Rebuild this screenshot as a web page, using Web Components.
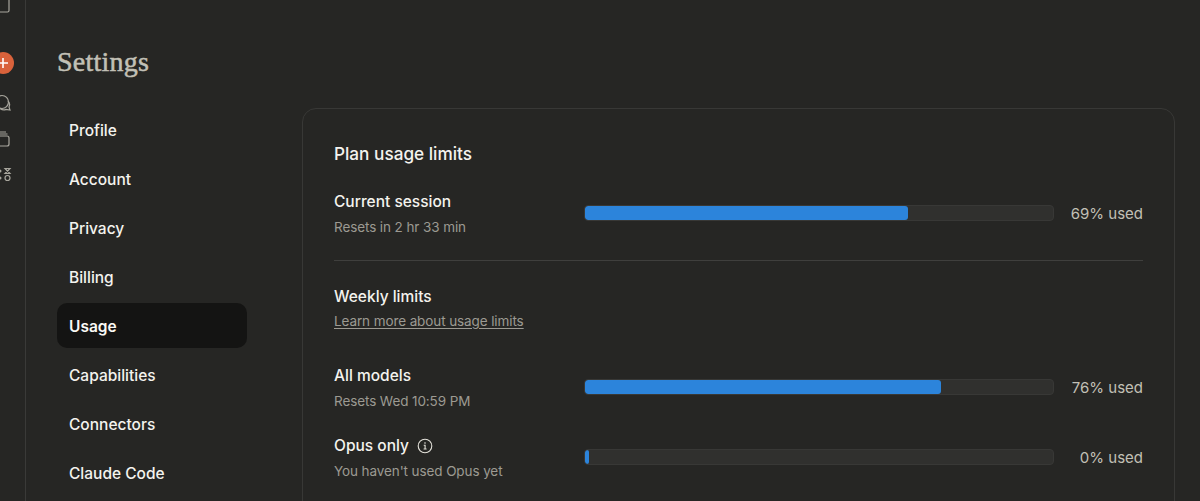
<!DOCTYPE html>
<html>
<head>
<meta charset="utf-8">
<style>
html, body { margin: 0; height: 501px; overflow: hidden; background: #262624; }
body { font-family: Inter, "Liberation Sans", sans-serif; color: #f4f3ee; }
</style>
</head>
<body>
<settings-page>
  <side-rail slot="rail"></side-rail>
  <nav-item>Profile</nav-item>
  <nav-item>Account</nav-item>
  <nav-item>Privacy</nav-item>
  <nav-item>Billing</nav-item>
  <nav-item active>Usage</nav-item>
  <nav-item>Capabilities</nav-item>
  <nav-item>Connectors</nav-item>
  <nav-item>Claude Code</nav-item>
  <usage-card slot="content">
    <usage-row label="Current session" note="Resets in 2 hr 33 min" value="69"></usage-row>
    <hr-line></hr-line>
    <weekly-head></weekly-head>
    <usage-row label="All models" note="Resets Wed 10:59 PM" value="76"></usage-row>
    <usage-row label="Opus only" note="You haven't used Opus yet" value="0" info></usage-row>
  </usage-card>
</settings-page>

<script>
class SettingsPage extends HTMLElement {
    constructor(){
        super();
        this.attachShadow({mode: 'open'});
        this.shadowRoot.innerHTML = `
        <style>
        :host { display: flex; height: 501px; overflow: hidden; }
        .rail { flex: none; width: 25px; border-right: 1px solid #3a3a38; overflow: hidden; }
        main { flex: 1; padding: 46px 25px 0 31px; min-width: 0; }
        h1 {
            margin: 0;
            font: 400 28px/32px "Liberation Serif", serif;
            letter-spacing: 0.25px;
            -webkit-text-stroke: 0.5px #c2c0b6;
            color: #c2c0b6;
        }
        .cols { display: flex; gap: 55px; margin-top: 30px; }
        .nav { flex: none; width: 190px; display: flex; flex-direction: column; gap: 4px; margin-top: -1px; }
        .content { flex: 1; min-width: 0; }
        </style>
        <div class="rail"><slot name="rail"></slot></div>
        <main>
            <h1>Settings</h1>
            <div class="cols">
                <div class="nav"><slot></slot></div>
                <div class="content"><slot name="content"></slot></div>
            </div>
        </main>`;
    }
}

class SideRail extends HTMLElement {
    constructor(){
        super();
        this.attachShadow({mode: 'open'});
        this.shadowRoot.innerHTML = `
        <style>
        :host { display: flex; flex-direction: column; align-items: flex-start; margin-left: -13px; }
        svg { display: block; fill: none; stroke: #a8a69d; stroke-width: 1.2; }
        .top { margin-top: -9px; }
        .new { margin-top: 34px; }
        .chat { margin-top: 15px; }
        .proj { margin-top: 17px; }
        .art { margin-top: 18px; }
        </style>
        <svg class="top" width="24" height="24" viewBox="0 0 24 24"><rect x="2.5" y="2" width="19.500" height="19" rx="1.500"/></svg>
        <svg class="new" width="28" height="28" viewBox="0 0 28 28" style="stroke:none">
            <circle cx="16" cy="14" r="11" fill="#d9623b"/>
            <path d="M16 9v10M11 14h10" stroke="#fff" stroke-width="1.6"/>
        </svg>
        <svg class="chat" width="28" height="22" viewBox="0 0 28 22">
            <circle cx="15" cy="10" r="6.5"/>
            <path d="M21 9c1.500 1.500 2 4 1 6l1 3-4-.6c-1.500.8-4 .6-6-.9"/>
        </svg>
        <svg class="proj" width="28" height="16" viewBox="0 0 28 16">
            <rect x="8" y="5" width="14" height="10" rx="2"/>
            <path d="M9.500 3h11M11 1h8"/>
        </svg>
        <svg class="art" width="28" height="18" viewBox="0 0 28 18">
            <circle cx="13" cy="6" r="1.500" fill="#a8a69d" stroke="none"/>
            <circle cx="13" cy="13" r="1.500" fill="#a8a69d" stroke="none"/>
            <path d="M18 3.500h5l-5 5h5z"/>
            <circle cx="20.500" cy="13" r="2.500"/>
        </svg>`;
    }
}

class NavItem extends HTMLElement {
    constructor(){
        super();
        this.attachShadow({mode: 'open'});
        this.shadowRoot.innerHTML = `
        <style>
        :host {
            display: block;
            height: 45px;
            line-height: 47px;
            padding-left: 12px;
            border-radius: 10px;
            font-size: 15.500px;
            font-weight: 450;
            color: #f4f3ee;
        }
        :host([active]) { background: #141413; font-weight: 600; color: #faf9f5; }
        </style>
        <slot></slot>`;
    }
}

class UsageCard extends HTMLElement {
    constructor(){
        super();
        this.attachShadow({mode: 'open'});
        this.shadowRoot.innerHTML = `
        <style>
        :host {
            display: block;
            box-sizing: border-box;
            height: 500px;
            padding: 32px 31px 0 31px;
            border: 1px solid #383836;
            border-radius: 14px;
        }
        h2 { margin: 0 0 21px; font: 500 17.200px/26px Inter, "Liberation Sans", sans-serif; color: #f4f3ee; }
        </style>
        <h2>Plan usage limits</h2>
        <slot></slot>`;
    }
}

class UsageRow extends HTMLElement {
    constructor(){
        super();
        this.attachShadow({mode: 'open'});
    }

    connectedCallback(){
        this.render();
    }

    render(){
        const value = Number(this.getAttribute('value'));
        const info = this.hasAttribute('info') ? `
            <svg width="16" height="16" viewBox="0 0 16 16" fill="none" stroke="#e4e2da" stroke-width="1.100">
                <circle cx="8" cy="8" r="6.800"/>
                <path d="M6.700 7.200H8.100V11M6.600 11h3"/>
                <circle cx="8" cy="5" r=".8" fill="#e4e2da" stroke="none"/>
            </svg>` : '';
        this.shadowRoot.innerHTML = `
        <style>
        :host { display: flex; align-items: center; height: 50px; margin-bottom: 20px; }
        .text { flex: none; width: 250px; align-self: flex-start; margin-top: 1px; }
        .label { display: flex; align-items: center; gap: 8px; font-size: 15.500px; line-height: 25px; font-weight: 500; color: #f4f3ee; }
        .note { font-size: 13.500px; letter-spacing: -0.1px; line-height: 27px; color: #9c9a92; }
        .track {
            flex: none;
            box-sizing: border-box;
            width: 470px;
            height: 16px;
            background: #30302e;
            border: 1px solid #383836;
            border-radius: 4px;
            overflow: hidden;
        }
        .fill { height: 100%; background: #2c84db; border-radius: 3px; min-width: 4px; }
        .used { flex: 1; text-align: right; font-size: 15px; color: #c2c0b6; white-space: nowrap; }
        </style>
        <div class="text">
            <div class="label">${this.getAttribute('label')}${info}</div>
            <div class="note">${this.getAttribute('note')}</div>
        </div>
        <div class="track"><div class="fill" style="width:${value}%"></div></div>
        <div class="used">${value}% used</div>`;
    }
}

class HrLine extends HTMLElement {
    constructor(){
        super();
        this.attachShadow({mode: 'open'});
        this.shadowRoot.innerHTML = `
        <style>:host { display: block; height: 1px; background: #3f3f3d; margin: 22px 0 24px; }</style>`;
    }
}

class WeeklyHead extends HTMLElement {
    constructor(){
        super();
        this.attachShadow({mode: 'open'});
        this.shadowRoot.innerHTML = `
        <style>
        :host { display: block; margin-bottom: 29px; }
        .title { font-size: 15.500px; line-height: 24px; font-weight: 500; color: #f4f3ee; }
        a { display: block; font-size: 13.500px; letter-spacing: -0.1px; line-height: 24px; color: #9c9a92; text-decoration: underline; text-underline-offset: 2px; }
        </style>
        <div class="title">Weekly limits</div>
        <a>Learn more about usage limits</a>`;
    }
}

customElements.define('settings-page', SettingsPage);
customElements.define('side-rail', SideRail);
customElements.define('nav-item', NavItem);
customElements.define('usage-card', UsageCard);
customElements.define('usage-row', UsageRow);
customElements.define('hr-line', HrLine);
customElements.define('weekly-head', WeeklyHead);
</script>
</body>
</html>
